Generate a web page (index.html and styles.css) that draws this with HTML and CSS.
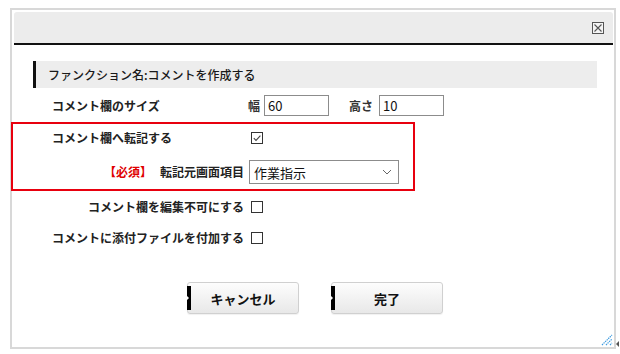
FILE: index.html
```html
<!DOCTYPE html>
<html lang="ja">
<head>
<meta charset="utf-8">
<link rel="stylesheet" href="styles.css">
</head>
<body>
<div class="frame">
  <div class="header">
    <span class="close"><svg width="10" height="10" viewBox="0 0 10 10"><path d="M1.5 1.5 L8.5 8.5 M8.5 1.5 L1.5 8.5" stroke="#555" stroke-width="1.1" fill="none"/></svg></span>
  </div>
  <div class="content">
    <div class="section-title">ファンクション名:コメントを作成する</div>
    <div class="row row-size">
      <div class="label">コメント欄のサイズ</div>
      <div class="ctrl">
        <span class="unit">幅</span><input class="text" type="text" value="60">
        <span class="unit unit-h">高さ</span><input class="text" type="text" value="10">
      </div>
    </div>
    <div class="highlight">
      <div class="row r2">
        <div class="label">コメント欄へ転記する</div>
        <div class="ctrl"><span class="cb"><svg width="10" height="10" viewBox="0 0 10 10"><path d="M1.8 5.2 L4 7.4 L8.4 2.6" stroke="#444" stroke-width="1.1" fill="none"/></svg></span></div>
      </div>
      <div class="row r3">
        <div class="label label-right"><span class="req">【必須】</span><span>転記元画面項目</span></div>
        <div class="ctrl">
          <div class="select"><span>作業指示</span><svg width="10" height="6" viewBox="0 0 10 6"><path d="M1 1 L5 5 L9 1" stroke="#666" stroke-width="1" fill="none"/></svg></div>
        </div>
      </div>
    </div>
    <div class="row r4">
      <div class="label label-right">コメント欄を編集不可にする</div>
      <div class="ctrl"><span class="cb"></span></div>
    </div>
    <div class="row r5">
      <div class="label">コメントに添付ファイルを付加する</div>
      <div class="ctrl"><span class="cb"></span></div>
    </div>
    <div class="buttons">
      <button class="btn" type="button">キャンセル</button>
      <button class="btn" type="button">完了</button>
    </div>
  </div>
  <svg class="grip" width="12" height="14" viewBox="0 0 12 14">
    <path d="M1 13 L11 3 M5 13 L11 7 M9 13 L11 11" stroke="#3d9be0" stroke-width="1.2" stroke-dasharray="1.4 0.8" fill="none"/>
  </svg>
</div>
<span class="edge-arrow"></span>
</body>
</html>
```
FILE: styles.css
```css
html, body {
  margin: 0;
  padding: 0;
}
body {
  position: relative;
  width: 620px;
  height: 354px;
  overflow: hidden;
  background: #fff;
  font-family: "Noto Sans CJK JP", "Noto Sans", sans-serif;
  color: #222;
}
.frame {
  position: relative;
  box-sizing: border-box;
  margin: 8px 0 0 10px;
  width: 606px;
  height: 341px;
  border: 2px solid #d8d8d8;
  padding: 2px 1px 0 2px;
}
.header {
  height: 31px;
  background: #ececec;
  border-bottom: 2px solid #111;
  border-radius: 3px 3px 0 0;
  display: flex;
  justify-content: flex-end;
  align-items: center;
  padding-right: 9px;
}
.close {
  box-sizing: border-box;
  width: 12px;
  height: 12px;
  border: 1px solid #555;
  background: #f4f4f4;
  display: flex;
  align-items: center;
  justify-content: center;
}
.content {
  padding-top: 16px;
}
.section-title {
  margin: 0 16px 0 19px;
  height: 27px;
  background: #ededed;
  border-left: 3px solid #111;
  padding-left: 12px;
  font-size: 12px;
  line-height: 27px;
  color: #1a1a1a;
  font-weight: 500;
}
.row {
  display: flex;
  align-items: center;
  margin-left: 38px;
}
.label {
  width: 192px;
  flex: none;
  font-size: 12px;
  line-height: 20px;
  font-weight: bold;
  color: #222;
  white-space: nowrap;
}
.label-right {
  text-align: right;
}
.ctrl {
  display: flex;
  align-items: center;
  margin-left: 4px;
}
.row-size {
  margin-top: 7px;
  height: 21px;
}
.unit {
  font-size: 12px;
  font-weight: bold;
  color: #333;
  margin-right: 4px;
}
.unit-h {
  margin-left: 20px;
  margin-right: 6px;
}
.text {
  box-sizing: border-box;
  width: 65px;
  height: 21px;
  border: 1px solid #8c8c8c;
  padding: 0 3px;
  margin: 0;
  font-family: "Noto Sans CJK JP", "Noto Sans", sans-serif;
  font-size: 13px;
  color: #111;
  outline: none;
}
.highlight {
  box-sizing: border-box;
  margin: 6px 0 0 -3px;
  width: 404px;
  border: 2px solid #e8000e;
  padding: 2px 0 5px;
}
.highlight .row {
  margin-left: 39px;
}
.r2 {
  height: 24px;
}
.r3 {
  height: 24px;
  margin-top: 10px;
}
.req {
  color: #e00000;
  margin-right: 8px;
}
.cb {
  box-sizing: border-box;
  width: 12px;
  height: 12px;
  margin-left: 3px;
  border: 1px solid #333;
  background: #fff;
  display: flex;
  align-items: center;
  justify-content: center;
}
.select {
  box-sizing: border-box;
  margin-left: 1px;
  width: 150px;
  height: 24px;
  border: 1px solid #8c8c8c;
  display: flex;
  align-items: center;
  justify-content: space-between;
  padding: 0 6px 0 4px;
  font-size: 13px;
  color: #111;
}
.r4 {
  margin-top: 6px;
  height: 20px;
}
.r5 {
  margin-top: 11px;
  height: 20px;
}
.buttons {
  display: flex;
  justify-content: center;
  gap: 32px;
  margin-top: 34px;
  padding-left: 3px;
}
.btn {
  position: relative;
  box-sizing: border-box;
  width: 112px;
  height: 32px;
  margin: 0;
  border: 1px solid #d0d0d0;
  border-radius: 3px;
  background: linear-gradient(#fdfdfd, #e8e8e8);
  box-shadow: 0 1px 1px rgba(0,0,0,0.06);
  font-family: "Noto Sans CJK JP", "Noto Sans", sans-serif;
  font-size: 13px;
  font-weight: bold;
  color: #111;
  padding: 0;
}
.btn::before {
  content: "";
  position: absolute;
  left: -1px;
  top: 3px;
  bottom: 3px;
  width: 4px;
  background: #000;
}
.btn::after {
  content: "";
  position: absolute;
  left: -1px;
  top: 50%;
  margin-top: -2px;
  border-left: 2px solid #fff;
  border-top: 2px solid transparent;
  border-bottom: 2px solid transparent;
}
.grip {
  position: absolute;
  right: 1px;
  bottom: 1px;
}
.edge-arrow {
  position: absolute;
  left: 616px;
  top: 341px;
  width: 0;
  height: 0;
  border-right: 3px solid #555;
  border-top: 3px solid transparent;
  border-bottom: 3px solid transparent;
}
```
